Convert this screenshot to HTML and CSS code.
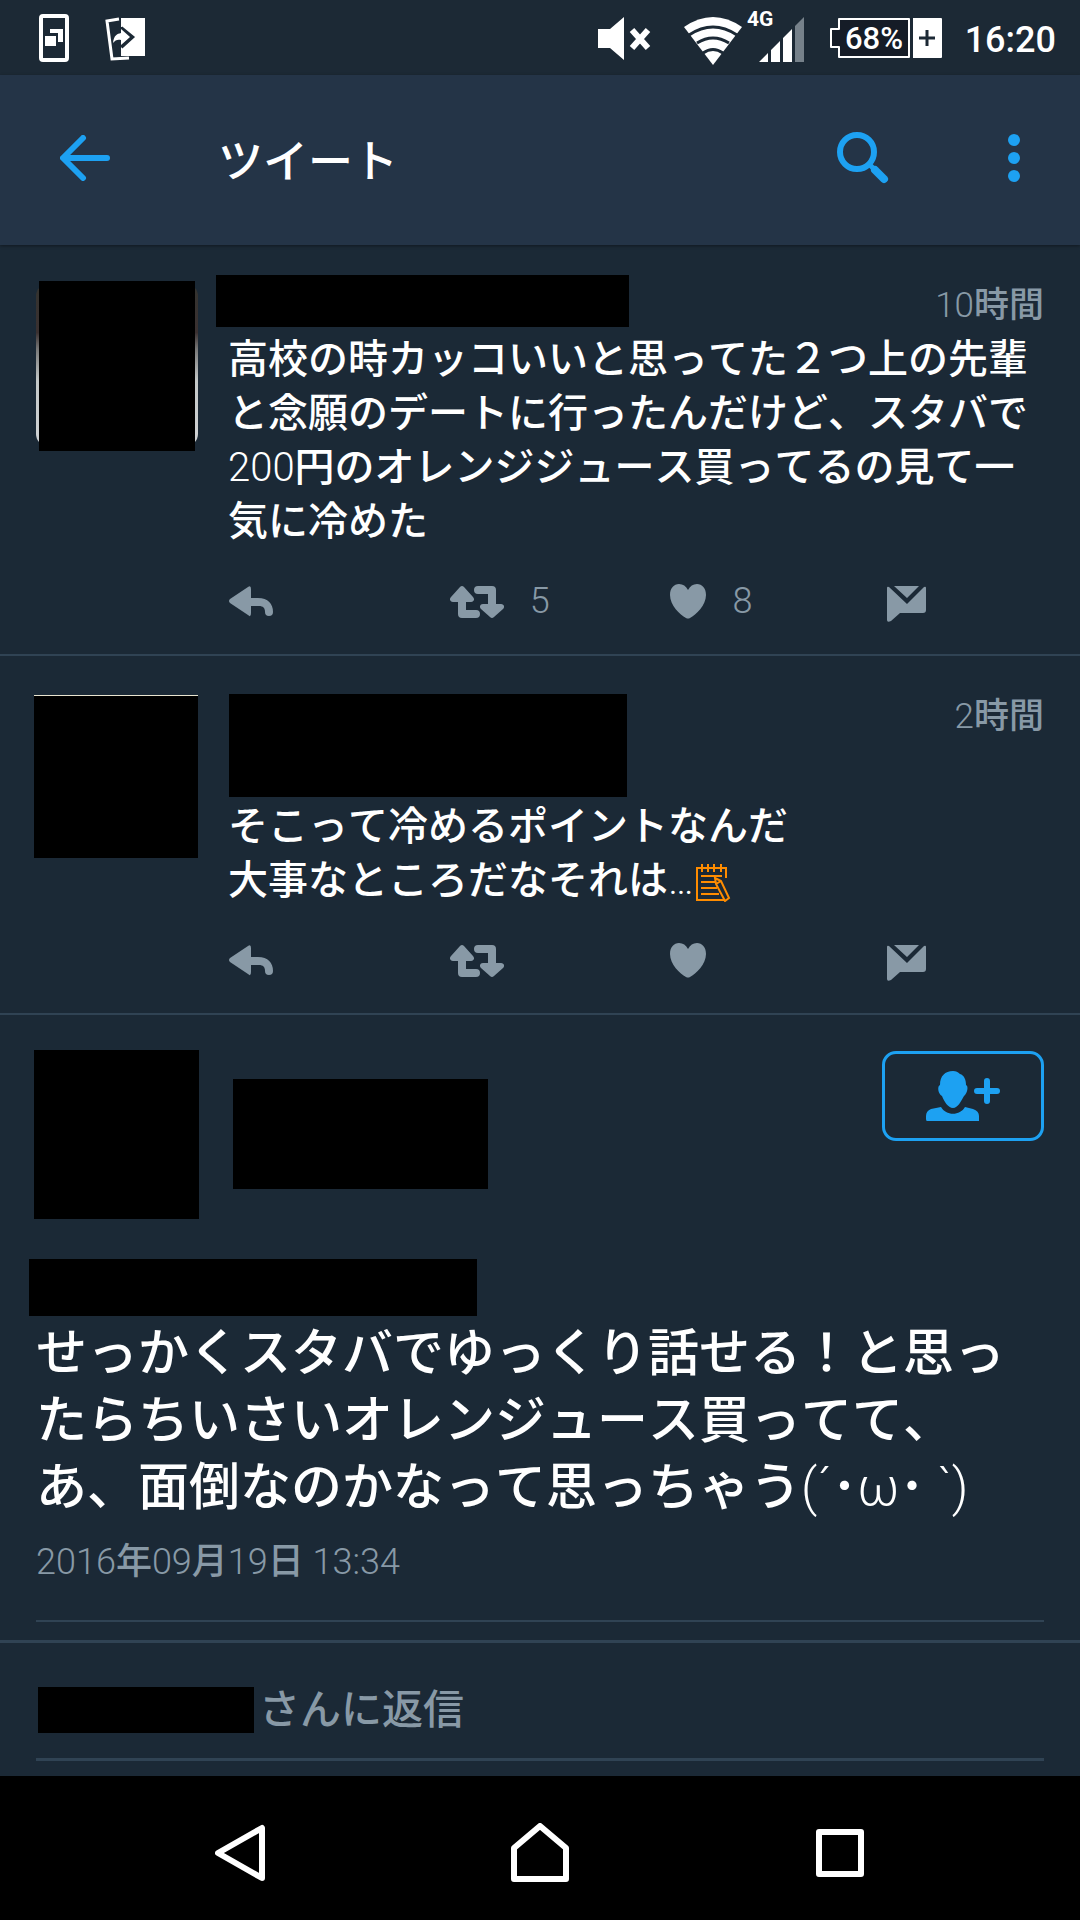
FILE: index.html
```html
<!DOCTYPE html>
<html lang="ja">
<head>
    <meta charset="UTF-8">
    <meta name="viewport" content="width=device-width, initial-scale=1">
    <title>ツイート</title>
    <link rel="stylesheet" href="styles.css">
</head>
<body>

    <!-- shared icons -->
    <svg class="sprite" aria-hidden="true">
        <symbol id="reply" viewBox="0 0 44 42">
            <path d="M1 19 19 7Q22 5 22 9V18H29C39 18 44 24 44 32Q44 36 40 36T36 32C36 28 34 26 30 26H22V33Q22 38 19 35L1 23Q-1 21 1 19Z"/>
        </symbol>
        <symbol id="retweet" viewBox="0 0 54 42">
            <path d="M10 7Q12 5 14 7L23 17C25 19 24 22 21 22H16V30H26Q30 30 30 34T26 38H12Q8 38 8 34V22H3C0 22-1 19 1 17ZM28 6H42Q46 6 46 10V24H51C54 24 55 27 53 29L44 37Q42 39 40 37L31 29C29 27 30 24 33 24H38V14H28Q24 14 24 10T28 6Z"/>
        </symbol>
        <symbol id="heart" viewBox="0 0 36 42">
            <path d="M18 10C20 6 23 4 27 4C32 4 36 8 36 15C36 25 26 35 20 38Q18 39 16 38C10 35 0 25 0 15C0 8 4 4 9 4C13 4 16 6 18 10Z"/>
        </symbol>
        <symbol id="mail" viewBox="0 0 39 42">
            <path d="M7 6H32L20 18ZM0 8Q0 6 2 7L20 24 37 7Q39 6 39 8V30Q39 33 36 33H13L4 41Q0 43 0 40Z"/>
        </symbol>
    </svg>

    <div class="statusbar">
        <svg class="notices" width="106" height="48" viewBox="0 0 106 48">
            <rect x="2" y="2" width="26" height="44" rx="2" fill="none" stroke="#fff" stroke-width="4"/>
            <path d="M6 22H17V32H6ZM11 15H24V28H19V19H11Z" fill="#fff"/>
            <path d="M80 5 68 7 73 45 90 44" fill="none" stroke="#fff" stroke-width="3"/>
            <path d="M82 4H106V42H82Z" fill="#fff"/>
            <path d="M82 13V14L93 23 82 33" fill="none" stroke="#1c2935" stroke-width="4"/>
            <path d="M74 29C75 21 78 20 82 19V15L91 23 82 31V26C79 25 76 26 74 29Z" fill="#fff"/>
        </svg>
        <svg class="signals" width="344" height="71" viewBox="0 -8 344 71">
            <g fill="#fff">
                <path d="M0 19H12L26 7V50L12 38H0Z"/>
                <path d="M34 20 50 38M50 20 34 38" stroke="#fff" stroke-width="6"/>
                <path d="M86 17Q115-3 144 17L115 55Z"/>
                <text class="net" x="149" y="16">4G</text>
                <path d="M161 52 170 43V52ZM173 52V40L182 31V52ZM185 52V28L194 19V52Z"/>
                <path d="M197 52V16L206 7V52Z" fill="#76818a"/>
            </g>
            <g fill="none" stroke="#1c2935" stroke-width="3">
                <path d="M91 25Q115 9 139 25M99 33Q115 23 131 33M105 43Q115 36 125 43"/>
            </g>
            <path d="M241 9H311V47H241V37H233V19H241Z" fill="#151c27" stroke="#fff" stroke-width="2" stroke-linejoin="round"/>
            <path d="M315 8H343Q344 8 344 9V47Q344 48 343 48H315Z" fill="#fff"/>
            <path d="M329 20V36M321 28H337" stroke="#1c2935" stroke-width="3"/>
            <text class="charge" x="247" y="39">68%</text>
        </svg>
        <span class="clock">16:20</span>
    </div>

    <header class="appbar">
        <button class="icon-btn" aria-label="戻る">
            <svg width="50" height="46" viewBox="0 0 50 46" fill="none" stroke="#1da1f2" stroke-width="6" stroke-linecap="round" stroke-linejoin="round">
                <path d="M23 3 3 23 23 43M4 23H47"/>
            </svg>
        </button>
        <h1>ツイート</h1>
        <button class="icon-btn search" aria-label="検索">
            <svg width="52" height="52" viewBox="0 0 52 52" fill="none" stroke="#1da1f2">
                <circle cx="20" cy="20" r="17" stroke-width="6"/>
                <path d="M32 32 38 38" stroke-width="5"/>
                <path d="M38 38 47 47" stroke-width="8" stroke-linecap="round"/>
            </svg>
        </button>
        <button class="icon-btn" aria-label="その他">
            <svg width="12" height="48" viewBox="0 0 12 48" fill="#1da1f2">
                <circle cx="6" cy="6" r="6"/>
                <circle cx="6" cy="24" r="6"/>
                <circle cx="6" cy="42" r="6"/>
            </svg>
        </button>
    </header>

    <main>
        <article class="tweet">
            <div class="avatar photo"><div class="avatar-mask"></div></div>
            <div class="body">
                <div class="meta">
                    <div class="mask name-short"></div>
                    <time><span class="lat">10</span>時間</time>
                </div>
                <p class="text">高校の時カッコいいと思ってた２つ上の先輩と念願のデートに行ったんだけど、スタバで<span class="lat">200</span>円のオレンジジュース買ってるの見て一気に冷めた</p>
                <div class="actions">
                    <button aria-label="返信"><svg width="44" height="42"><use href="#reply"/></svg></button>
                    <button aria-label="リツイート"><svg width="54" height="42"><use href="#retweet"/></svg><span>5</span></button>
                    <button aria-label="いいね"><svg width="36" height="42"><use href="#heart"/></svg><span>8</span></button>
                    <button aria-label="メッセージ"><svg width="39" height="42"><use href="#mail"/></svg></button>
                </div>
            </div>
        </article>

        <article class="tweet">
            <div class="avatar covered"></div>
            <div class="body">
                <div class="meta">
                    <div class="mask name-tall"></div>
                    <time><span class="lat">2</span>時間</time>
                </div>
                <p class="text">そこって冷めるポイントなんだ<br>大事なところだなそれは<span class="lat">…</span><svg class="memo" width="36" height="38" viewBox="0 0 36 38" fill="none" stroke="#ff8c00" stroke-width="2">
                    <path d="M31 14V4H2V36H30M7 0V8M13 0V8M19 0V8M26 0V8M6 12H27M6 18H20M6 24H22M6 30H24"/>
                    <path d="M20 14 26 17 34 34 30 37 21 20ZM21 20 26 17"/>
                </svg></p>
                <div class="actions">
                    <button aria-label="返信"><svg width="44" height="42"><use href="#reply"/></svg></button>
                    <button aria-label="リツイート"><svg width="54" height="42"><use href="#retweet"/></svg></button>
                    <button aria-label="いいね"><svg width="36" height="42"><use href="#heart"/></svg></button>
                    <button aria-label="メッセージ"><svg width="39" height="42"><use href="#mail"/></svg></button>
                </div>
            </div>
        </article>

        <article class="detail">
            <div class="author">
                <div class="mask author-avatar"></div>
                <div class="mask author-name"></div>
                <button class="follow" aria-label="フォローする">
                    <svg width="74" height="50" viewBox="0 0 74 50" fill="#1da1f2">
                        <path d="M14 14C14 5 19 0 27 0C30 0 32 1 34 3C38 4 40 9 40 14C43 15 41 23 38 25C35 30 32 37 27 37C22 37 18 30 16 25C12 23 11 15 14 14Z"/>
                        <path d="M15 36C20 45 34 45 39 36L47 38Q53 40 53 45V50H1Q0 50 0 48V45Q0 40 5 38Z"/>
                        <path d="M61 10V30M51 20H71" stroke="#1da1f2" stroke-width="6" stroke-linecap="round"/>
                    </svg>
                </button>
            </div>
            <div class="mask mention"></div>
            <p class="large">せっかくスタバでゆっくり話せる！と思ったらちいさいオレンジュース買ってて、<br>あ、面倒なのかなって思っちゃう<span class="lat">(´</span>･<span class="lat">ω</span>･<span class="lat"> `)</span></p>
            <div class="date"><span class="lat">2016</span>年<span class="lat">09</span>月<span class="lat">19</span>日<span class="lat"> 13:34</span></div>
        </article>

        <form class="replybox">
            <div class="field">
                <label class="mask reply-name" for="reply-text" aria-label="返信"></label>
                <input id="reply-text" type="text" placeholder="さんに返信">
            </div>
        </form>
    </main>

    <nav class="navbar">
        <button aria-label="戻る">
            <svg width="50" height="58" viewBox="0 0 50 58"><path d="M47 4V54L3 29Z"/></svg>
        </button>
        <button aria-label="ホーム">
            <svg width="58" height="60" viewBox="0 0 58 60"><path d="M3 25 29 3 55 25V56H3Z"/></svg>
        </button>
        <button aria-label="アプリ履歴">
            <svg width="50" height="50" viewBox="0 0 50 50"><path d="M4 4H46V46H4Z"/></svg>
        </button>
    </nav>

</body>
</html>
```

FILE: styles.css
```css
* {
    box-sizing: border-box;
}

body {
    margin: 0;
    min-height: 100vh;
    display: flex;
    flex-direction: column;
    background: #1b2936;
    color: #fff;
    font-family: Roboto, "Noto Sans CJK JP", sans-serif;
    font-weight: 500;
    font-kerning: none;
}

button {
    display: flex;
    align-items: center;
    padding: 0;
    border: none;
    background: none;
    color: inherit;
    font: inherit;
    cursor: pointer;
}

svg {
    display: block;
    flex: none;
}

.sprite {
    position: absolute;
    width: 0;
    height: 0;
}

/* thin digits and latin signs inside japanese text */
.lat {
    font-weight: 300;
}

.mask {
    background: #000;
}

/* status bar */
.statusbar {
    display: flex;
    align-items: center;
    height: 75px;
    padding: 0 24px 0 39px;
    background: #1c2935;
}

.signals {
    margin-left: auto;
}

.net {
    font-size: 21px;
    font-weight: 700;
}

.charge {
    font-size: 31px;
    fill: #fff;
}

.clock {
    margin-left: 23px;
    padding-top: 4px;
    font-size: 36px;
}

/* app bar */
.appbar {
    display: flex;
    align-items: center;
    height: 170px;
    padding: 0 60px 4px;
    background: #243447;
    box-shadow: 0 1px 3px rgba(0, 0, 0, 0.4);
}

.appbar h1 {
    margin: 0 0 0 108px;
    font-size: 45px;
    font-weight: 500;
}

.search {
    margin-left: auto;
    margin-right: 119px;
}

/* timeline */
.tweet {
    display: flex;
    gap: 30px;
    padding: 38px 36px 0;
    border-bottom: 2px solid #304354;
}

.avatar {
    position: relative;
    flex: none;
    width: 162px;
    height: 162px;
    margin-top: 1px;
    border-radius: 12px;
}

.photo {
    background: linear-gradient(#33332f, #3a3030 30%, #777 40%, #c4c8c8 60%, #d0d2d4);
}

.avatar-mask {
    position: absolute;
    top: -3px;
    left: 3px;
    width: 156px;
    height: 170px;
    background: #000;
}

.covered {
    margin-left: -2px;
    width: 164px;
    height: 163px;
    border-top: 1px solid #e8e4d0;
    border-radius: 0;
    background: #000;
}

.body {
    flex: 1;
}

.meta {
    display: flex;
    justify-content: space-between;
    align-items: flex-start;
}

.name-short {
    width: 413px;
    height: 52px;
    margin: -8px 0 6px -12px;
}

.name-tall {
    width: 398px;
    height: 103px;
    margin: 0 0 3px 1px;
}

time {
    height: 44px;
    line-height: 45px;
    font-size: 35px;
    color: #8899a6;
}

.text {
    margin: 0;
    font-size: 40px;
    line-height: 54px;
}

.memo {
    display: inline-block;
    margin-left: 1px;
    vertical-align: -8px;
}

.actions {
    display: grid;
    grid-template-columns: 221fr 221fr 217fr 157fr;
    height: 105px;
    padding: 0 0 2px 1px;
    color: #8899a6;
    fill: #8899a6;
}

.actions span {
    margin-left: 26px;
    font-size: 36px;
    font-weight: 300;
}

/* opened tweet */
.detail {
    margin: 0 36px 18px;
    padding: 35px 0 37px;
    border-bottom: 2px solid #304354;
}

.author {
    display: flex;
    align-items: flex-start;
}

.author-avatar {
    width: 165px;
    height: 169px;
    margin-left: -2px;
}

.author-name {
    width: 255px;
    height: 110px;
    margin: 29px 0 0 34px;
}

.follow {
    justify-content: center;
    width: 162px;
    height: 90px;
    margin: 1px 0 0 auto;
    border: 3px solid #1da1f2;
    border-radius: 14px;
}

.mention {
    width: 448px;
    height: 57px;
    margin: 40px 0 4px -7px;
}

.large {
    margin: 0;
    font-size: 51px;
    line-height: 67px;
}

.date {
    margin-top: 20px;
    font-size: 36px;
    line-height: 42px;
    color: #8899a6;
    white-space: pre-wrap;
}

/* reply field */
.replybox {
    padding: 0 36px 15px;
    border-top: 3px solid #304354;
}

.field {
    display: flex;
    gap: 5px;
    padding: 44px 0 25px 2px;
    border-bottom: 3px solid #304354;
}

.reply-name {
    width: 216px;
    height: 46px;
}

.field input {
    flex: 1;
    min-width: 0;
    height: 46px;
    padding: 0;
    border: none;
    outline: none;
    background: none;
    color: #fff;
    font: inherit;
    font-size: 41px;
    line-height: 46px;
}

.field input::placeholder {
    color: #8899a6;
    opacity: 1;
}

/* system navigation */
.navbar {
    display: grid;
    grid-template-columns: repeat(3, 1fr);
    height: 144px;
    margin-top: auto;
    padding: 10px 90px 0;
    background: #000;
}

.navbar button {
    justify-content: center;
}

.navbar svg {
    fill: none;
    stroke: #fff;
    stroke-width: 6px;
    stroke-linejoin: round;
}
```
